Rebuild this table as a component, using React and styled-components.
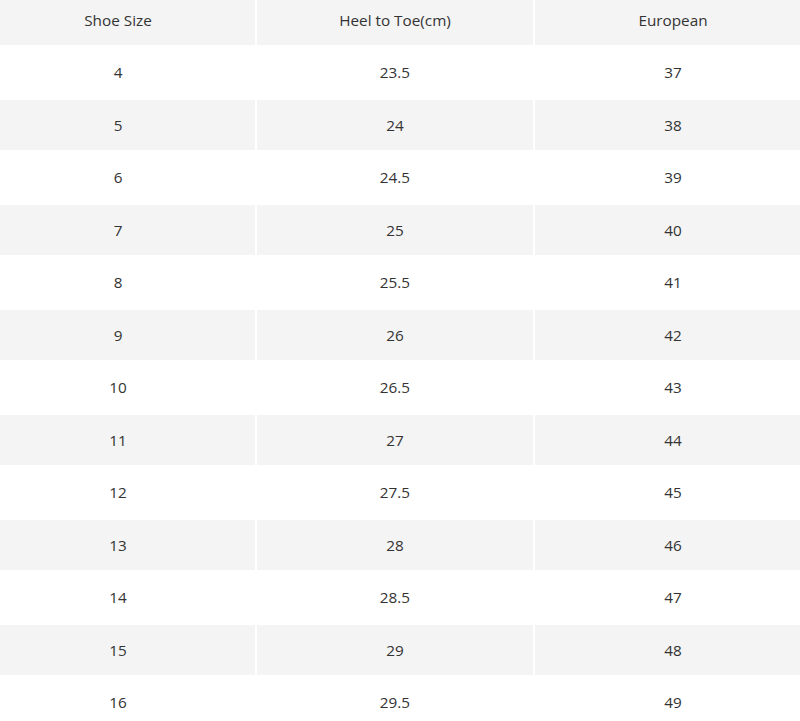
import React from "react";
import styled, { createGlobalStyle } from "styled-components";

const GlobalStyle = createGlobalStyle`
  html, body {
    margin: 0;
    padding: 0;
    background: #fff;
  }
  body {
    font-family: "Open Sans", "Liberation Sans", sans-serif;
    color: #333;
  }
`;

const Frame = styled.div`
  width: 800px;
  height: 721px;
  overflow: hidden;
`;

const Table = styled.div`
  width: 830px;
  margin: -5.5px 0 0 -19px;
  display: flex;
  flex-direction: column;
  gap: 2px;
`;

const Row = styled.div`
  display: grid;
  grid-template-columns: 274px 276px 276px;
  column-gap: 2px;
  height: 50.5px;
`;

const Cell = styled.div`
  display: flex;
  align-items: center;
  justify-content: center;
  background: ${(p) => (p.$shade ? "#f4f4f4" : "#fff")};
  font-size: 15.3px;
  color: #333;
`;

const sizes = [
  ["4", "23.5", "37"],
  ["5", "24", "38"],
  ["6", "24.5", "39"],
  ["7", "25", "40"],
  ["8", "25.5", "41"],
  ["9", "26", "42"],
  ["10", "26.5", "43"],
  ["11", "27", "44"],
  ["12", "27.5", "45"],
  ["13", "28", "46"],
  ["14", "28.5", "47"],
  ["15", "29", "48"],
  ["16", "29.5", "49"],
];

const App = () => (
  <Frame>
    <GlobalStyle />
    <Table>
      <Row>
        <Cell $shade>Shoe Size</Cell>
        <Cell $shade>Heel to Toe(cm)</Cell>
        <Cell $shade>European</Cell>
      </Row>
      {sizes.map((row, i) => (
        <Row key={row[0]}>
          {row.map((v, j) => (
            <Cell key={j} $shade={i % 2 === 1}>
              {v}
            </Cell>
          ))}
        </Row>
      ))}
    </Table>
  </Frame>
);

export default App;
